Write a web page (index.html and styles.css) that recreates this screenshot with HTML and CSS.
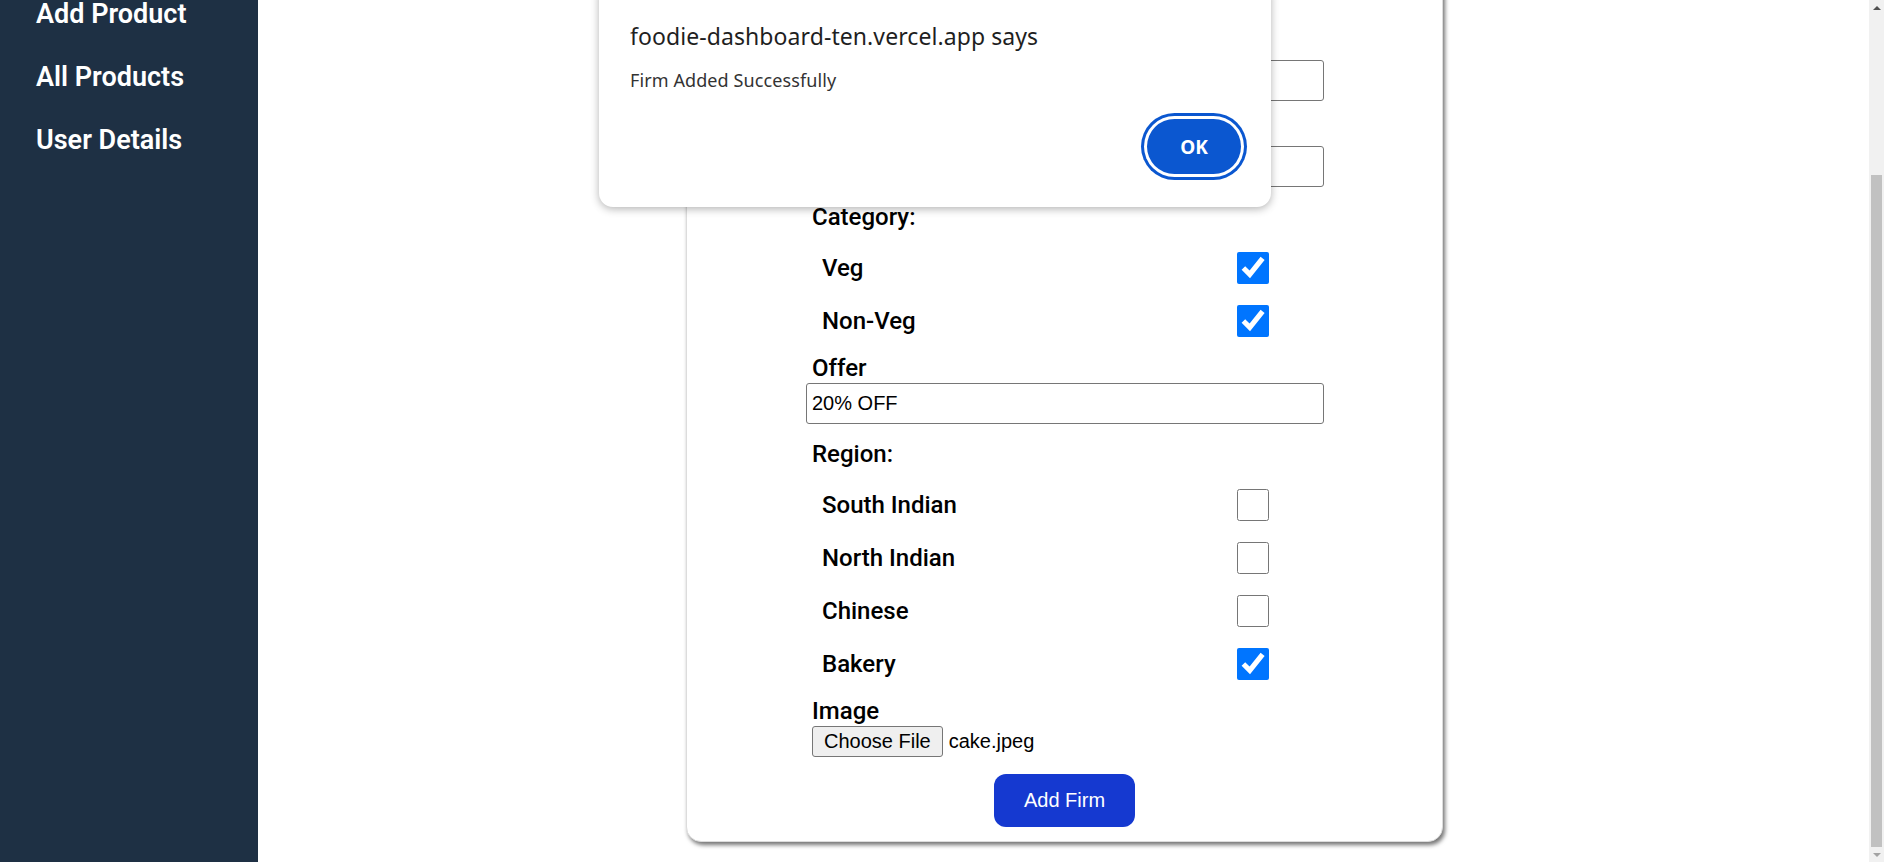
FILE: index.html
```html
<!DOCTYPE html>
<html lang="en">
<head>
<meta charset="utf-8">
<title>Foodie Dashboard</title>
<link rel="stylesheet" href="styles.css">
</head>
<body>
<div class="app">
  <aside class="sidebar">
    <ul class="nav">
      <li>Add Firm</li>
      <li>Add Product</li>
      <li>All Products</li>
      <li>User Details</li>
    </ul>
  </aside>
  <main class="main">
    <form class="card">
      <h3 class="card-title">Add Firm</h3>
      <label class="field-label">Firm Name</label>
      <input class="text-input" type="text" value="Cakes">
      <label class="field-label">Area</label>
      <input class="text-input" type="text" value="Hyd">
      <div class="field-label">Category:</div>
      <div class="check-group">
        <label class="check-row"><span>Veg</span><input type="checkbox" class="check" checked></label>
        <label class="check-row"><span>Non-Veg</span><input type="checkbox" class="check" checked></label>
      </div>
      <label class="field-label">Offer</label>
      <input class="text-input" type="text" value="20% OFF">
      <div class="field-label">Region:</div>
      <div class="check-group">
        <label class="check-row"><span>South Indian</span><input type="checkbox" class="check"></label>
        <label class="check-row"><span>North Indian</span><input type="checkbox" class="check"></label>
        <label class="check-row"><span>Chinese</span><input type="checkbox" class="check"></label>
        <label class="check-row"><span>Bakery</span><input type="checkbox" class="check" checked></label>
      </div>
      <div class="field-label">Image</div>
      <div class="file-row">
        <button type="button" class="file-btn">Choose File</button>
        <span class="file-name">cake.jpeg</span>
      </div>
      <button type="button" class="submit-btn">Add Firm</button>
    </form>
  </main>
  <div class="scrollbar">
    <div class="sb-arrow sb-up"></div>
    <div class="sb-track"><div class="sb-thumb"></div></div>
    <div class="sb-arrow sb-down"></div>
  </div>
</div>

<div class="alert" role="alertdialog">
  <div class="alert-title">foodie-dashboard-ten.vercel.app says</div>
  <div class="alert-msg">Firm Added Successfully</div>
  <div class="alert-actions">
    <button type="button" class="alert-ok">OK</button>
  </div>
</div>
</body>
</html>
```

FILE: styles.css
```css
html, body {
  margin: 0;
  padding: 0;
  height: 100%;
}

body {
  font-family: Roboto, "Liberation Sans", Arial, sans-serif;
  color: #000;
  overflow: hidden;
  position: relative;
  background: #fff;
}

.app {
  display: flex;
  height: 862px;
}

/* Sidebar */
.sidebar {
  width: 258px;
  flex: none;
  background: #1e3044;
  color: #fff;
  overflow: hidden;
}

.nav {
  list-style: none;
  margin: -64px 0 0;
  padding: 0 0 0 36px;
  display: flex;
  flex-direction: column;
  gap: 32px;
}

.nav li {
  font-size: 27px;
  font-weight: 600;
  line-height: 31px;
}

/* Main */
.main {
  flex: 1;
  display: flex;
  flex-direction: column;
  justify-content: flex-end;
  align-items: center;
  padding-bottom: 20px;
  overflow: hidden;
}

.card {
  flex: none;
  width: 757px;
  margin-left: 2px;
  box-sizing: border-box;
  padding: 0 125px 14px;
  display: flex;
  flex-direction: column;
  background: #fff;
  border: 1px solid #dcdcdc;
  border-radius: 15px;
  box-shadow: 2px 3px 4px rgba(0, 0, 0, 0.55);
}

.card-title {
  margin: 20px 0 0;
  font-size: 28px;
  text-align: center;
}

.field-label {
  display: block;
  margin-top: 15px;
  font-size: 24px;
  font-weight: 500;
  line-height: 30px;
}

.text-input {
  margin: 0 -7px 0 -6px;
  height: 41px;
  box-sizing: border-box;
  border: 1px solid #767676;
  border-radius: 3px;
  padding: 0 5px;
  font-family: "Liberation Sans", Arial, sans-serif;
  font-size: 20px;
  color: #000;
  background: #fff;
}

.check-group {
  margin-top: 20px;
  margin-bottom: 1px;
  display: flex;
  flex-direction: column;
  gap: 21px;
}

.check-row {
  display: flex;
  align-items: center;
  justify-content: space-between;
  height: 32px;
  padding: 0 48px 0 10px;
  font-size: 24px;
  font-weight: 500;
}

.check {
  width: 32px;
  height: 32px;
  margin: 0;
  flex: none;
}

.file-row {
  display: flex;
  align-items: center;
  gap: 6px;
}

.file-btn {
  height: 31px;
  box-sizing: border-box;
  padding: 0 11px;
  background: #efefef;
  border: 1px solid #767676;
  border-radius: 3px;
  font-family: "Liberation Sans", Arial, sans-serif;
  font-size: 20px;
  color: #000;
}

.file-name {
  font-family: "Liberation Sans", Arial, sans-serif;
  font-size: 20px;
}

.submit-btn {
  align-self: center;
  margin-top: 17px;
  width: 141px;
  height: 53px;
  border: none;
  border-radius: 12px;
  background: #1539d0;
  color: #fff;
  font-family: "Liberation Sans", Arial, sans-serif;
  font-size: 20px;
}

/* Fake scrollbar */
.scrollbar {
  width: 15px;
  flex: none;
  background: #f1f1f1;
  display: flex;
  flex-direction: column;
}

.sb-arrow {
  height: 15px;
  flex: none;
  display: flex;
  align-items: center;
  justify-content: center;
}

.sb-arrow::before {
  content: "";
  width: 0;
  height: 0;
  border-left: 4px solid transparent;
  border-right: 4px solid transparent;
}

.sb-up::before {
  border-bottom: 4px solid #505050;
}

.sb-down::before {
  border-top: 4px solid #a3a3a3;
}

.sb-track {
  flex: 1;
  display: flex;
  flex-direction: column;
  justify-content: flex-end;
  padding: 0 2px;
}

.sb-thumb {
  height: 672px;
  background: #c1c1c1;
}

/* Alert dialog */
.alert {
  position: absolute;
  left: 599px;
  top: -20px;
  width: 672px;
  height: 227px;
  box-sizing: border-box;
  padding: 42px 30px 0 31px;
  background: #fff;
  border-radius: 14px;
  box-shadow: 0 2px 8px rgba(0, 0, 0, 0.3);
  font-family: "Noto Sans", "Open Sans", sans-serif;
}

.alert-title {
  font-size: 23px;
  line-height: 28px;
  letter-spacing: 0.08px;
  color: #1f1f1f;
}

.alert-msg {
  margin-top: 18px;
  font-size: 18px;
  line-height: 24px;
  letter-spacing: 0.1px;
  color: #333;
}

.alert-actions {
  margin-top: 27px;
  display: flex;
  justify-content: flex-end;
}

.alert-ok {
  width: 94px;
  height: 55px;
  border: none;
  border-radius: 28px;
  background: #0b57d0;
  color: #fff;
  font-family: "Noto Sans", "Open Sans", sans-serif;
  font-size: 19px;
  font-weight: 700;
  box-shadow: 0 0 0 3px #fff, 0 0 0 6px #0b57d0;
}
```
